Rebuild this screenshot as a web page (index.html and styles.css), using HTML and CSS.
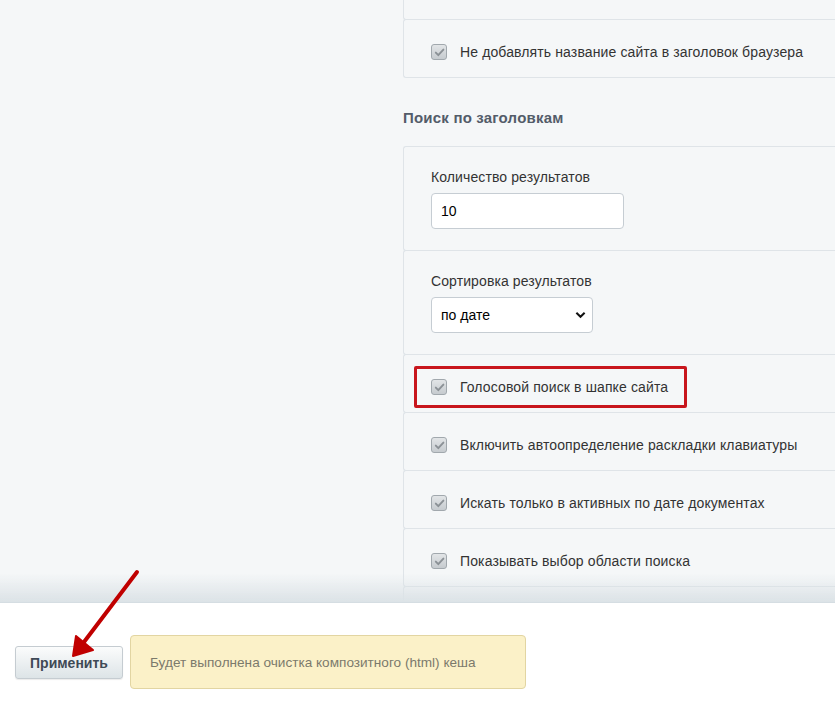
FILE: index.html
```html
<!DOCTYPE html>
<html lang="ru">
<head>
<meta charset="utf-8">
<title>Настройки поиска</title>
<link rel="stylesheet" href="styles.css">
</head>
<body>
<div class="page">
  <div class="side"></div>
  <div class="content">
    <div class="card card-cut"></div>
    <div class="card row">
      <span class="cb"><svg viewBox="0 0 15 15" width="15" height="15"><path d="M3.8 7.6 L6.3 10.2 L11.4 4.6" fill="none" stroke="#8b9196" stroke-width="1.9" stroke-linecap="round" stroke-linejoin="round"/></svg></span>
      <span class="lbl">Не добавлять название сайта в заголовок браузера</span>
    </div>

    <h3 class="section">Поиск по заголовкам</h3>

    <div class="card field">
      <div class="flabel">Количество результатов</div>
      <div class="input input-num">10</div>
    </div>
    <div class="card field">
      <div class="flabel">Сортировка результатов</div>
      <div class="input input-sel">по дате<svg class="chev" viewBox="0 0 12 8" width="11" height="8"><path d="M1.5 1.5 L6 6 L10.5 1.5" fill="none" stroke="#111" stroke-width="2.2"/></svg></div>
    </div>
    <div class="card row">
      <span class="hl"></span>
      <span class="cb"><svg viewBox="0 0 15 15" width="15" height="15"><path d="M3.8 7.6 L6.3 10.2 L11.4 4.6" fill="none" stroke="#8b9196" stroke-width="1.9" stroke-linecap="round" stroke-linejoin="round"/></svg></span>
      <span class="lbl">Голосовой поиск в шапке сайта</span>
    </div>
    <div class="card row">
      <span class="cb"><svg viewBox="0 0 15 15" width="15" height="15"><path d="M3.8 7.6 L6.3 10.2 L11.4 4.6" fill="none" stroke="#8b9196" stroke-width="1.9" stroke-linecap="round" stroke-linejoin="round"/></svg></span>
      <span class="lbl">Включить автоопределение раскладки клавиатуры</span>
    </div>
    <div class="card row">
      <span class="cb"><svg viewBox="0 0 15 15" width="15" height="15"><path d="M3.8 7.6 L6.3 10.2 L11.4 4.6" fill="none" stroke="#8b9196" stroke-width="1.9" stroke-linecap="round" stroke-linejoin="round"/></svg></span>
      <span class="lbl">Искать только в активных по дате документах</span>
    </div>
    <div class="card row">
      <span class="cb"><svg viewBox="0 0 15 15" width="15" height="15"><path d="M3.8 7.6 L6.3 10.2 L11.4 4.6" fill="none" stroke="#8b9196" stroke-width="1.9" stroke-linecap="round" stroke-linejoin="round"/></svg></span>
      <span class="lbl">Показывать выбор области поиска</span>
    </div>
    <div class="card row"></div>
  </div>
</div>

<div class="footer">
  <div class="shadow"></div>
  <div class="bar">
    <button class="btn">Применить</button>
    <div class="notice">Будет выполнена очистка композитного (html) кеша</div>
  </div>
</div>

<svg class="arrow" width="160" height="110" viewBox="0 0 160 110">
  <path d="M137 4 L84 74" stroke="#c00000" stroke-width="4" stroke-linecap="round" fill="none"/>
  <path d="M73 88 L76 68 L93 82 Z" fill="#c00000" stroke="#c00000" stroke-width="2" stroke-linejoin="round"/>
</svg>
</body>
</html>
```

FILE: styles.css
```css
html, body {
  margin: 0;
  padding: 0;
}
body {
  background: #f5f7f8;
  font-family: Arial, "Liberation Sans", Helvetica, sans-serif;
  font-size: 14px;
  color: #333;
  height: 716px;
  overflow: hidden;
}
.page {
  display: grid;
  grid-template-columns: 403px 1fr;
}
.content {
  display: flex;
  flex-direction: column;
}
.card {
  background: #f5f7f8;
  border: 1px solid #dfe4e8;
  border-right: none;
  border-radius: 3px 0 0 3px;
  margin-top: -1px;
  position: relative;
}
.card-cut {
  height: 40px;
  margin-top: -22px;
}
.row {
  display: flex;
  align-items: center;
  gap: 13px;
  height: 16px;
  padding: 24px 0 17px 27px;
}
.cb {
  width: 16px;
  height: 16px;
  box-sizing: border-box;
  border: 1px solid #a1a8ad;
  border-radius: 3px;
  background: linear-gradient(#e2e5e7, #c6cbcf);
  display: flex;
  flex: none;
}
.cb svg {
  margin: -0.5px;
}
.lbl {
  line-height: 16px;
  color: #333;
  letter-spacing: 0.12px;
}
.hl {
  position: absolute;
  left: 10px;
  top: 11px;
  width: 267px;
  height: 36px;
  border: 3px solid #c8161d;
  border-radius: 2px;
}
.section {
  margin: 31px 0 20px 0;
  font-size: 15px;
  line-height: 18px;
  font-weight: bold;
  color: #535c69;
  letter-spacing: 0.2px;
}
.field {
  padding: 22px 0 21px 27px;
}
.flabel {
  line-height: 17px;
  margin-bottom: 7px;
  color: #333;
  letter-spacing: 0.1px;
}
.input {
  box-sizing: border-box;
  height: 36px;
  background: #fff;
  border: 1px solid #c6cdd3;
  border-radius: 4px;
  display: flex;
  align-items: center;
  padding: 0 9px;
  color: #000;
}
.input-num {
  width: 193px;
}
.input-sel {
  width: 162px;
  justify-content: space-between;
  padding-right: 6px;
}
.chev {
  display: block;
}
.footer {
  position: fixed;
  left: 0;
  right: 0;
  bottom: 0;
}
.shadow {
  height: 28px;
  background: linear-gradient(rgba(220,227,231,0), #dbe2e6);
  border-bottom: 1px solid #d5dde2;
}
.bar {
  background: #fff;
  height: 113px;
  display: flex;
  align-items: flex-start;
  gap: 7px;
  padding: 32px 0 0 15px;
  box-sizing: border-box;
}
.btn {
  margin-top: 11px;
  width: 108px;
  height: 33px;
  border: 1px solid #c5ccd1;
  border-radius: 3px;
  background: linear-gradient(#fbfcfc, #dde4e7);
  font-family: Arial, "Liberation Sans", sans-serif;
  font-weight: bold;
  font-size: 14px;
  color: #3f4a56;
  box-shadow: 0 1px 1px rgba(0,0,0,0.08);
  padding: 0;
}
.notice {
  width: 396px;
  height: 54px;
  box-sizing: border-box;
  background: #fbf1c8;
  border: 1px solid #e2d5a2;
  border-radius: 4px;
  padding: 0 19px;
  display: flex;
  align-items: center;
  color: #7b7a6c;
  font-size: 13.6px;
}
.arrow {
  position: fixed;
  left: 0;
  top: 568px;
}
```
